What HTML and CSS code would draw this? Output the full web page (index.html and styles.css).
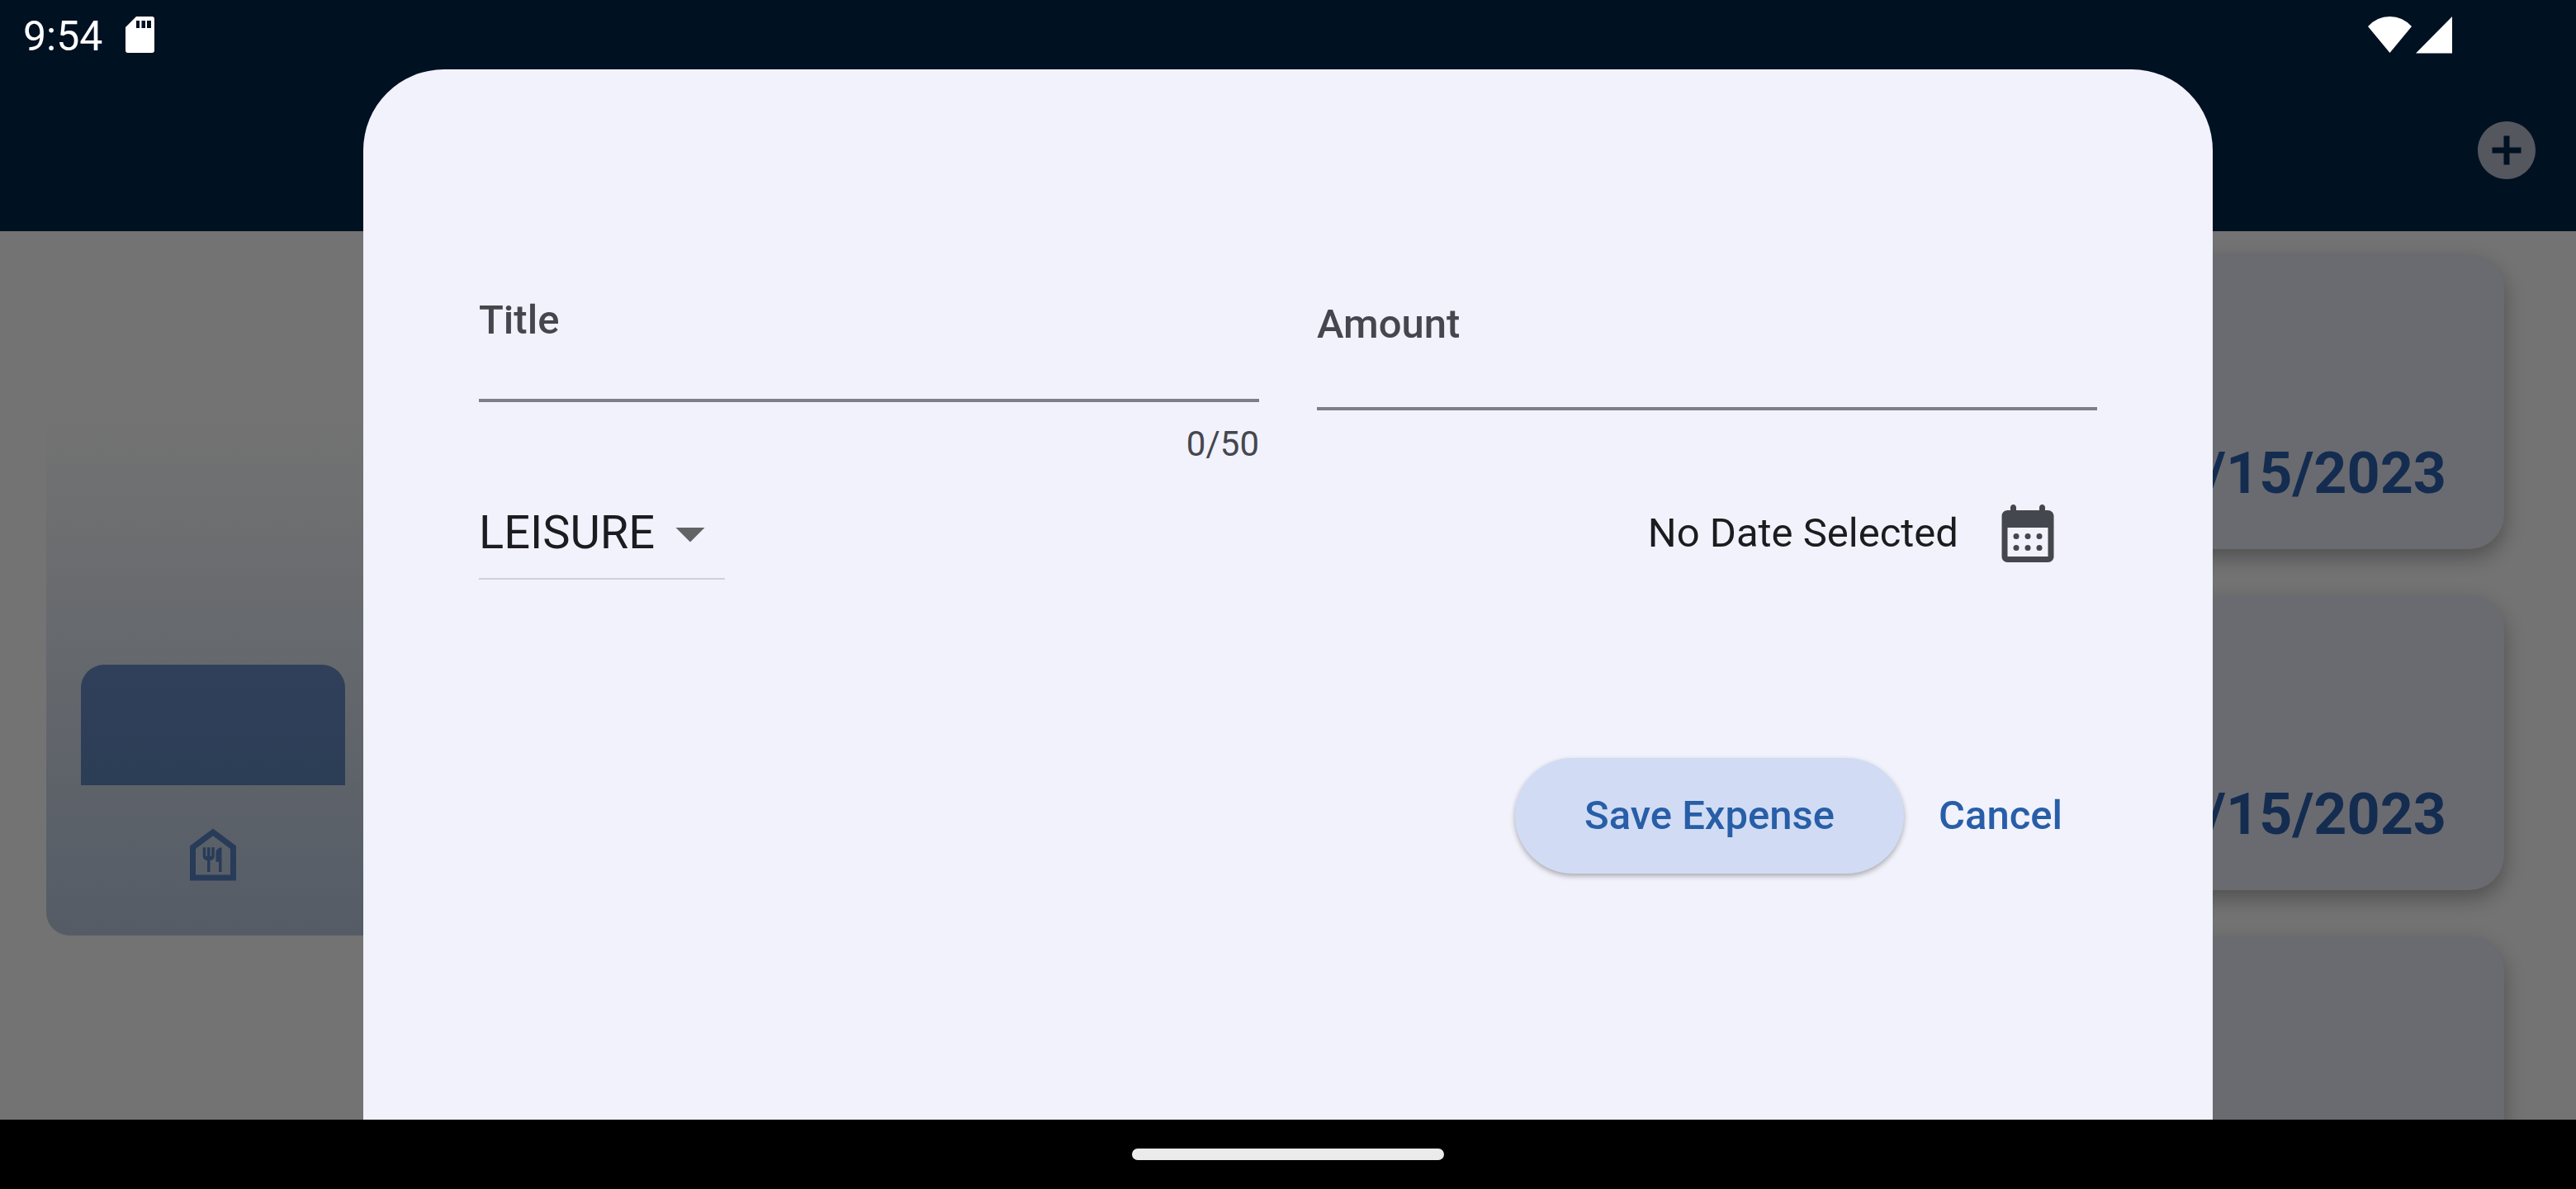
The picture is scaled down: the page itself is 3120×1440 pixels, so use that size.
FILE: index.html
```html
<!DOCTYPE html>
<html lang="en">
<head>
  <meta charset="utf-8">
  <meta name="viewport" content="width=device-width, initial-scale=1">
  <title>Expense Tracker</title>
  <link rel="stylesheet" href="styles.css">
</head>
<body>
  <div class="screen">
    <header class="app-bar">
      <div class="status-bar">
        <span class="clock">9:54</span>
        <svg class="status-icon" viewBox="0 0 36 45" width="36" height="45" aria-hidden="true">
          <path fill="#fff" fill-rule="evenodd" d="M13 0h19q3 0 3 3v38q0 3-3 3H3q-3 0-3-3V13zM13 5v9h4V5zm6.500 0v9h4.500V5zm6.500 0v9h5V5z"/>
        </svg>
        <svg class="status-icon status-signal" viewBox="0 0 102 45" width="102" height="45" aria-hidden="true">
          <path fill="#fff" d="M0 12Q11 0 26.500 0T53 12L26.500 44zM102 0v44.500H58z"/>
        </svg>
      </div>
      <div class="toolbar">
        <button class="icon-button add-button" type="button" aria-label="Add expense">
          <svg viewBox="0 0 24 24" width="84" height="84" aria-hidden="true">
            <path fill="#54575e" d="M12 2C6.480 2 2 6.480 2 12s4.480 10 10 10 10-4.480 10-10S17.520 2 12 2zm5 11h-4v4h-2v-4H7v-2h4V7h2v4h4v2z"/>
          </svg>
        </button>
      </div>
    </header>

    <main class="overview">
      <section class="chart" aria-label="Expenses by category">
        <div class="chart-column">
          <div class="chart-bar"></div>
          <svg class="chart-icon" viewBox="0 0 24 24" width="84" height="84" aria-hidden="true">
            <path fill="#283b58" d="M12 5.500l6 4.500v9H6v-9l6-4.500M12 3L4 9v12h16V9l-8-6zm-.5 6.500v3H11v-3h-1v3h-.5v-3h-1v3c0 .83.67 1.500 1.500 1.500v4h1v-4c.83 0 1.500-.67 1.500-1.500v-3h-1zm1.500 2v3h1V18h1V9.500c-1.100 0-2 .9-2 2z"/>
          </svg>
        </div>
      </section>
      <section class="expenses" aria-label="Expenses">
        <article class="expense-card"><span class="expense-date">/15/2023</span></article>
        <article class="expense-card"><span class="expense-date">/15/2023</span></article>
        <article class="expense-card"></article>
      </section>
    </main>

    <form class="sheet">
      <div class="fields">
        <div class="field">
          <label class="field-label" for="title">Title</label>
          <input class="field-input" id="title" type="text" maxlength="50">
          <span class="field-counter">0/50</span>
        </div>
        <div class="field field-amount">
          <label class="field-label" for="amount">Amount</label>
          <input class="field-input" id="amount" type="text" inputmode="decimal">
        </div>
      </div>

      <div class="options">
        <div class="category">
          <select class="category-select" aria-label="Category">
            <option>LEISURE</option>
          </select>
          <svg class="category-arrow" viewBox="0 0 24 24" width="84" height="84" aria-hidden="true">
            <path fill="#636366" d="M7 10l5 5 5-5z"/>
          </svg>
        </div>
        <div class="date">
          <span class="date-text">No Date Selected</span>
          <button class="icon-button" type="button" aria-label="Pick a date">
            <svg viewBox="0 0 24 24" width="84" height="84" aria-hidden="true">
              <path fill="#44474e" d="M19 4h-1V3c0-.55-.45-1-1-1s-1 .45-1 1v1H8V3c0-.55-.45-1-1-1s-1 .45-1 1v1H5c-1.110 0-1.990.9-1.990 2L3 20c0 1.100.89 2 2 2h14c1.100 0 2-.9 2-2V6c0-1.100-.9-2-2-2zm0 16H5V10h14v10z"/>
              <g fill="#44474e">
                <circle cx="8" cy="13" r="1"/><circle cx="12" cy="13" r="1"/><circle cx="16" cy="13" r="1"/>
                <circle cx="8" cy="17" r="1"/><circle cx="12" cy="17" r="1"/><circle cx="16" cy="17" r="1"/>
              </g>
            </svg>
          </button>
        </div>
      </div>

      <div class="actions">
        <button class="button button-save" type="submit">Save Expense</button>
        <button class="button button-cancel" type="button">Cancel</button>
      </div>
    </form>
  </div>
  <div class="navigation-bar"><div class="home-handle"></div></div>
</body>
</html>
```
FILE: styles.css
```css
*,
*::before,
*::after {
  box-sizing: border-box;
}

body {
  margin: 0;
  height: 100vh;
  display: flex;
  flex-direction: column;
  font-family: Roboto, "Liberation Sans", sans-serif;
  font-size: 49px;
  line-height: 56px;
  background: #000;
}

button,
input,
select {
  margin: 0;
  padding: 0;
  border: 0;
  border-radius: 0;
  background: none;
  font: inherit;
  color: inherit;
}

svg {
  display: block;
}

.screen {
  position: relative;
  flex: 1;
  min-height: 0;
  display: flex;
  flex-direction: column;
  overflow: hidden;
  background: #737373;
}

/* App bar */
.app-bar {
  flex: none;
  background: #001122;
}

.status-bar {
  height: 84px;
  padding: 0 150px 0 28px;
  display: flex;
  align-items: center;
  gap: 28px;
  color: #fff;
}

.clock {
  padding-top: 4px;
  font-size: 50px;
}

.status-signal {
  margin-left: auto;
}

.toolbar {
  height: 196px;
  display: flex;
  align-items: center;
  justify-content: flex-end;
}

.icon-button {
  flex: none;
  width: 168px;
  height: 168px;
  display: flex;
  align-items: center;
  justify-content: center;
}

/* Overview behind the sheet */
.overview {
  flex: 1;
  min-height: 0;
  display: grid;
  grid-template-columns: 1fr 1fr;
  grid-template-rows: minmax(0, 1fr);
}

.chart {
  align-self: center;
  height: 630px;
  margin: 0 56px;
  padding: 56px 42px;
  display: flex;
  align-items: flex-end;
  border-radius: 28px;
  background: linear-gradient(to top, #555c66, #737373);
}

.chart-column {
  width: 320px;
  display: flex;
  flex-direction: column;
  align-items: center;
  gap: 42px;
}

.chart-bar {
  width: 100%;
  height: 146px;
  border-radius: 28px 28px 0 0;
  background: linear-gradient(#31405a, #2c3d56);
}

.expenses {
  padding: 28px 87px 0 56px;
  display: flex;
  flex-direction: column;
  gap: 56px;
}

.expense-card {
  flex: none;
  min-height: 357px;
  padding: 56px 70px 50px;
  display: flex;
  align-items: flex-end;
  justify-content: flex-end;
  border-radius: 42px;
  background: #6a6b70;
  box-shadow: 0 10px 24px rgba(0, 0, 0, 0.3);
}

.expense-date {
  font-size: 70px;
  font-weight: 700;
  line-height: 84px;
  color: #142c50;
}

/* Modal sheet */
.sheet {
  position: absolute;
  inset: 84px 0 0;
  width: min(2240px, 100%);
  margin: 0 auto;
  padding: 276px 140px 0;
  border-radius: 98px 98px 0 0;
  background: #f2f2fc;
  color: #1c1b1f;
}

.fields {
  display: grid;
  grid-template-columns: 1fr 1fr;
  gap: 70px;
}

.field {
  display: flex;
  flex-direction: column;
}

.field-label {
  font-weight: 500;
  color: #44474e;
}

.field-input {
  width: 100%;
  height: 71px;
  border-bottom: 4px solid #7d7e88;
}

.field-amount {
  padding-top: 5px;
}

.field-amount .field-input {
  height: 76px;
}

.field-counter {
  align-self: flex-end;
  margin-top: 27px;
  font-size: 42px;
  line-height: 48px;
  color: #44474e;
}

.options {
  height: 168px;
  display: flex;
  align-items: center;
  justify-content: space-between;
}

.category {
  position: relative;
  width: 298px;
}

.category-select {
  width: 100%;
  height: 112px;
  appearance: none;
  border-bottom: 2px solid #d0d0d6;
  font-size: 56px;
  line-height: 64px;
}

.category-arrow {
  position: absolute;
  top: 14px;
  right: 0;
  pointer-events: none;
}

.date {
  display: flex;
  align-items: center;
}

.actions {
  margin-top: 188px;
  display: flex;
  justify-content: flex-end;
}

.button {
  height: 140px;
  border-radius: 70px;
  font-weight: 500;
  color: #285ea7;
}

.button-save {
  padding: 0 84px;
  background: #d1dcf4;
  box-shadow: 0 3px 6px rgba(0, 0, 0, 0.3);
}

.button-cancel {
  padding: 0 42px;
}

/* System navigation */
.navigation-bar {
  flex: none;
  height: 84px;
  display: flex;
  align-items: center;
  justify-content: center;
}

.home-handle {
  width: 378px;
  height: 14px;
  border-radius: 7px;
  background: #ebebeb;
}
```
